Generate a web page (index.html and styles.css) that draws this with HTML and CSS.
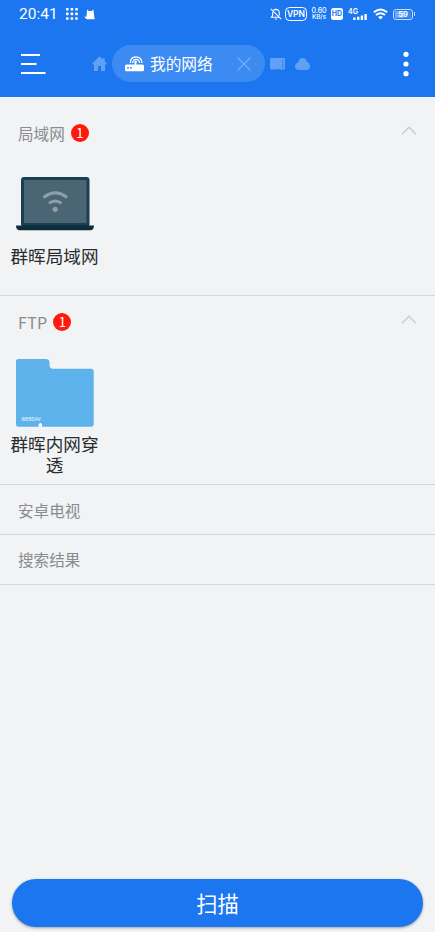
FILE: index.html
```html
<!DOCTYPE html>
<html lang="zh-CN">
<head>
<meta charset="utf-8">
<title>我的网络</title>
<link rel="stylesheet" href="styles.css">
</head>
<body>
<header class="header">
  <div class="status">
    <span class="clock">20:41</span>
    <svg class="grid-icon" width="12" height="12" viewBox="0 0 12 12" fill="#fff"><rect x="0" y="0" width="2.6" height="2.6" rx=".6"/><rect x="4.6" y="0" width="2.6" height="2.6" rx=".6"/><rect x="9.2" y="0" width="2.6" height="2.6" rx=".6"/><rect x="0" y="4.6" width="2.6" height="2.6" rx=".6"/><rect x="4.6" y="4.6" width="2.6" height="2.6" rx=".6"/><rect x="9.2" y="4.6" width="2.6" height="2.6" rx=".6"/><rect x="0" y="9.2" width="2.6" height="2.6" rx=".6"/><rect x="4.6" y="9.2" width="2.6" height="2.6" rx=".6"/><rect x="9.2" y="9.2" width="2.6" height="2.6" rx=".6"/></svg>
    <svg class="cat-icon" width="12" height="11" viewBox="0 0 12 11"><path d="M3 .5 4.8 2h2.8L9.4.5 10 5l.6 5.2H3Q.6 9.600.3 6.500q.6 1.600 2.200 1.200Z" fill="#fff"/><path d="M5 3.800h.7M7.300 3.800H8" stroke="#8bb8f9" stroke-width=".7"/></svg>
    <div class="status-right">
      <svg class="bell" width="12" height="12" viewBox="0 0 12 12" fill="none" stroke="#fff" stroke-width="1.100"><path d="M3.600 2.400Q4.300 1.500 6 1.400q3.300.2 3.300 3.600v2.500M2.700 4v3.600L1.400 9.200H9M.8.8l10.400 10.400M5 11h2"/></svg>
      <span class="vpn">VPN</span>
      <span class="speed"><span class="rate">0.60</span><span class="unit">KB/s</span></span>
      <span class="hd">HD</span>
      <svg class="signal" width="20" height="14" viewBox="0 0 20 14"><text x="0" y="6.800" textLength="10" lengthAdjust="spacingAndGlyphs" class="fourg">4G</text><path d="M5.200 10.400h2.400V13H5.200zM9 9.700h2.400V13H9zM12.700 8.600h2.400V13h-2.400zM16.400 7h2.400v6h-2.400z" fill="#fff"/></svg>
      <svg class="wifi" width="15" height="12" viewBox="0 0 15 12" fill="none" stroke="#fff" stroke-width="1.900"><path d="M.8 4.300Q7.500-1.300 14.200 4.300M3 7q4.500-3.700 9 0"/><path d="M7.500 11.500 5 9q2.500-1.800 5 0Z" fill="#fff" stroke="none"/></svg>
      <span class="battery"><span class="level">59</span></span><i class="tip"></i>
    </div>
  </div>
  <nav class="toolbar">
    <svg class="menu" width="25" height="22" viewBox="0 0 25 22"><path d="M0 2h19M0 11h15.500M0 20h24.500" stroke="#fff" stroke-width="1.800"/></svg>
    <svg class="home" width="15" height="15" viewBox="0 0 15 15"><path d="M7.500.2.2 7.500 1 8.400h1V15h4V10h3v5h4V8.400h1l.8-.9L12.700 5.200V2h-1.600v1.600Z" fill="#629ff7"/></svg>
    <div class="tab">
      <svg class="router" width="19" height="16" viewBox="0 0 19 16"><path d="M1.500 8.500h8V6h1.800v2.500h6.200Q19 8.500 19 10v4q0 1.200-1.500 1.200h-16Q0 15.200 0 14v-4q0-1.500 1.500-1.500Z" fill="#fff"/><path d="M5.400 7q0-5.900 5.400-6.100 5.800.2 6.200 6.100M7.700 7q.2-3.500 3.200-3.700 3.500.2 3.700 3.700" fill="none" stroke="#fff" stroke-width="1.200"/><circle cx="10.700" cy="6" r="1.200" fill="#fff"/><circle cx="3" cy="11.800" r=".9" fill="#1b76f0"/><circle cx="6" cy="11.800" r=".9" fill="#1b76f0"/></svg>
      <span class="tab-title">我的网络</span>
      <svg class="close" width="14" height="14" viewBox="0 0 14 14"><path d="m.5.5 13 13m0-13-13 13" stroke="#78adf8" stroke-width="1.100"/></svg>
    </div>
    <svg class="card" width="15" height="12" viewBox="0 0 15 12"><path d="M1 0h13q1 0 1 1v9.500q0 1-1 1h-4l-.7-.8-.8.800H7.300l-.8-.8-.8.800H1q-1 0-1-1V1q0-1 1-1Z" fill="#629ff7"/><path d="M12.800 2v8" stroke="#276fda" stroke-width="1" stroke-dasharray="1.200 1"/></svg>
    <svg class="cloud" width="15" height="12" viewBox="0 0 15 12"><path d="M3.600 12Q0 11.900 0 8.300 0 5.500 3 4.400 3.800.1 7.700.1q3.700.1 4.300 4Q15 5.200 15 8.200q0 3.700-3.500 3.800Z" fill="#629ff7"/></svg>
    <svg class="more" width="6" height="26" viewBox="0 0 6 26" fill="#fff"><circle cx="3" cy="3.300" r="2.600"/><circle cx="3" cy="13" r="2.600"/><circle cx="3" cy="22.700" r="2.600"/></svg>
  </nav>
</header>
<main>
  <section class="group lan">
    <h2 class="heading"><span>局域网</span><span class="badge">1</span>
      <svg class="chevron" width="16" height="9" viewBox="0 0 16 9"><path d="m1 8.200 7-7 7 7" fill="none" stroke="#c9cbce" stroke-width="1.300"/></svg></h2>
    <div class="item">
      <svg class="laptop" width="78" height="55" viewBox="0 0 78 55"><rect x="5" y="0" width="68.500" height="50" rx="3" fill="#193f53"/><rect x="8" y="3" width="62.500" height="43" fill="#4a6675"/><path d="M0 48.500h78q-.2 4.800-3.500 4.800h-71Q.2 53.300 0 48.500Z" fill="#0b2d3c"/><path d="M27.500 20.500q12-9.300 23.500 0M33 26.200q6.200-4.500 12.400 0" fill="none" stroke="#8c9faa" stroke-width="3"/><circle cx="39.200" cy="32.300" r="2.600" fill="#8c9faa"/></svg>
      <span class="label">群晖局域网</span>
    </div>
  </section>
  <section class="group ftp">
    <h2 class="heading"><span class="latin">FTP</span><span class="badge">1</span>
      <svg class="chevron" width="16" height="9" viewBox="0 0 16 9"><path d="m1 8.200 7-7 7 7" fill="none" stroke="#c9cbce" stroke-width="1.300"/></svg></h2>
    <div class="item">
      <svg class="folder" width="78" height="68" viewBox="0 0 78 68"><path d="M2.500 0h28q2.500 0 3 2.500v4q.3 3 3.500 3.200h38q2.700 0 2.700 2.700V65q0 2.700-2.700 2.700h-72.500Q0 67.700 0 65V2.500Q0 0 2.500 0Z" fill="#5eb2eb"/><text x="5.500" y="62.400" textLength="19" lengthAdjust="spacingAndGlyphs" class="webdav">WEBDAV</text><path d="M22.600 65h.9v-1h1.700v1h.8v2.700h-3.400Z" fill="#fff"/></svg>
      <span class="label">群晖内网穿透</span>
    </div>
  </section>
  <section class="group row"><h2 class="heading">安卓电视</h2></section>
  <section class="group row results"><h2 class="heading">搜索结果</h2></section>
</main>
<footer class="footer"><button class="scan" type="button">扫描</button></footer>
</body>
</html>
```
FILE: styles.css
```css
* { box-sizing: border-box; }
body {
  margin: 0;
  height: 932px;
  display: flex;
  flex-direction: column;
  overflow: hidden;
  background: #f1f3f5;
  color: #292b2d;
  font-family: Roboto, "Noto Sans CJK SC", sans-serif;
}
svg { display: block; flex: none; }
.header { height: 97px; background: #1b76f0; color: #fff; }
.status { height: 28px; display: flex; align-items: center; padding: 0 19px; }
.clock { width: 47px; font-size: 15.5px; line-height: 28px; }
.cat-icon { margin-left: 6px; }
.status-right { display: flex; align-items: center; margin-left: auto; width: 146px; height: 28px; }
.vpn {
  flex: none; width: 22px; height: 14px; margin-left: 3px;
  border: 1px solid #fff; border-radius: 4.5px;
  font: 600 8.5px/12px Inter, sans-serif; text-align: center;
}
.speed {
  flex: none; width: 18px; margin-left: 3px;
  display: flex; flex-direction: column; align-items: center;
  font: 500 7px/6.5px Inter, sans-serif;
}
.unit { font-size: 6.3px; }
.hd {
  flex: none; width: 12px; height: 12px; margin-left: 3px; border-radius: 2.5px;
  background: #fff; color: #1b76f0;
  font: 700 7px/12px Inter, sans-serif; text-align: center;
}
.signal { margin-left: 5px; }
.fourg { fill: #fff; font: 600 7.5px Inter, sans-serif; }
.wifi { margin-left: 5px; }
.battery { flex: none; width: 20px; height: 11px; margin-left: 5px; padding: 1px; border: 1px solid #c9ddfb; border-radius: 3px; }
.level {
  display: block; height: 7px; border-radius: 1px;
  background: linear-gradient(90deg, #76abf6 59%, #3b88f2 59%);
  font: 700 7.5px/7.5px Inter, sans-serif; text-align: center;
}
.tip { flex: none; width: 1px; height: 4px; margin-left: 1px; background: #c9ddfb; }
.toolbar { height: 72px; display: flex; align-items: center; padding: 0 26px 0 21px; }
.home { margin: 0 0 2px 46px; }
.tab {
  width: 153px; height: 37px; margin: 0 0 1px 5px; padding: 0 14px 0 13px;
  display: flex; align-items: center;
  border-radius: 19px; background: #3c8bf3;
}
.tab-title { margin: 2px 0 0 6px; font-size: 15.7px; line-height: 24px; white-space: nowrap; }
.close { margin-left: auto; }
.card { margin-left: 5px; }
.cloud { margin-left: 10px; }
.more { margin-left: auto; }
.group { border-bottom: 1px solid #d5d7da; }
.lan { height: 199px; }
.ftp { height: 189px; }
.row { height: 50px; }
.heading {
  height: 50px; margin: 0; padding: 0 18px;
  display: flex; align-items: center;
  color: #898b8e; font-size: 15.6px; font-weight: 400;
}
.lan .heading { height: 72px; }
.ftp .heading { height: 52px; }
.results .heading { height: 48px; }
.latin { font-family: "Noto Sans CJK SC", sans-serif; font-size: 16px; letter-spacing: .3px; }
.badge {
  width: 18px; height: 18px; margin-left: 6px; border-radius: 50%;
  background: #ff190f; color: #fff;
  font: 400 13px/18px "Noto Sans CJK SC", sans-serif; text-align: center;
}
.chevron { margin-left: auto; margin-bottom: 5px; }
.item { width: 109px; display: flex; flex-direction: column; align-items: center; }
.laptop { margin-top: 8px; }
.folder { margin-top: 11px; }
.label { width: 92px; font-size: 17.6px; line-height: 21px; text-align: center; }
.lan .label { margin-top: 15px; }
.ftp .label { margin-top: 8px; }
.webdav { fill: #e3f3fd; font: 600 5.5px "Open Sans", sans-serif; }
.footer { margin-top: auto; padding: 0 12px 5px; }
.scan {
  display: block; width: 100%; height: 48px; padding: 3px 0 0; border: 0; border-radius: 24px;
  background: #1b76f0; color: #fff;
  font: 400 21.3px/45px Roboto, "Noto Sans CJK SC", sans-serif;
  box-shadow: 0 1px 3px rgba(0, 0, 0, .35);
}
```
